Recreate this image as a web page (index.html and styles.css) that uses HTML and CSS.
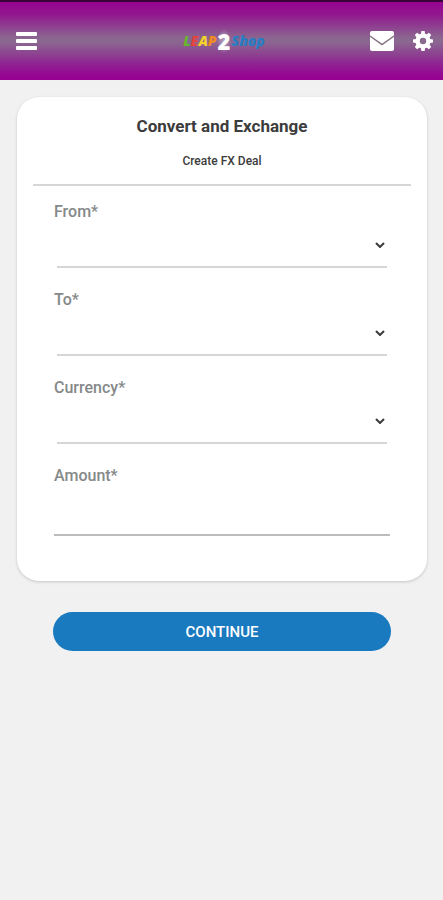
FILE: index.html
```html
<!DOCTYPE html>
<html lang="en">
<head>
<meta charset="utf-8">
<meta name="viewport" content="width=device-width, initial-scale=1">
<title>Convert and Exchange</title>
<link rel="stylesheet" href="styles.css">
</head>
<body>
<header class="topbar">
  <button class="icon-button menu" type="button" aria-label="Menu">
    <svg width="22" height="18" viewBox="0 0 22 18" fill="#fff"><rect x="1" width="21" height="4" rx="1"/><rect x="1" y="7" width="21" height="4" rx="1"/><rect x="1" y="14" width="21" height="4" rx="1"/></svg>
  </button>
  <a class="logo" href="#"><span class="green">L</span><span class="red">E</span><span class="yellow">A</span><span class="orange">P</span><span class="two">2</span><span class="blue">Shop</span></a>
  <div class="actions">
    <button class="icon-button" type="button" aria-label="Messages">
      <svg width="26" height="20" viewBox="0 0 26 20"><rect x="1" width="24" height="20" rx="2" fill="#fff"/><path d="M1 5l12 8.500 12-8.500" fill="none" stroke="#857080" stroke-width="1.500"/></svg>
    </button>
    <button class="icon-button" type="button" aria-label="Settings">
      <svg width="20" height="20" viewBox="0 0 20 20"><g fill="#fff"><circle cx="10" cy="10" r="7.600"/><path d="M7.900 3l.5-3h3.200l.5 3v14l-.5 3H8.400l-.5-3z"/><path d="M7.900 3l.5-3h3.200l.5 3v14l-.5 3H8.400l-.5-3z" transform="rotate(45 10 10)"/><path d="M7.900 3l.5-3h3.200l.5 3v14l-.5 3H8.400l-.5-3z" transform="rotate(90 10 10)"/><path d="M7.900 3l.5-3h3.200l.5 3v14l-.5 3H8.400l-.5-3z" transform="rotate(135 10 10)"/></g><circle cx="10" cy="10" r="3.200" fill="#886a8e"/></svg>
    </button>
  </div>
</header>
<main>
  <form>
    <section class="card">
      <div class="heading">
        <h1>Convert and Exchange</h1>
        <p>Create FX Deal</p>
      </div>
      <div class="fields">
        <div class="field">
          <label for="from">From*</label>
          <div class="select"><select id="from"><option></option></select><svg width="10" height="6" viewBox="0 0 10 6"><path d="M1 1l4 4 4-4"/></svg></div>
        </div>
        <div class="field">
          <label for="to">To*</label>
          <div class="select"><select id="to"><option></option></select><svg width="10" height="6" viewBox="0 0 10 6"><path d="M1 1l4 4 4-4"/></svg></div>
        </div>
        <div class="field">
          <label for="currency">Currency*</label>
          <div class="select"><select id="currency"><option></option></select><svg width="10" height="6" viewBox="0 0 10 6"><path d="M1 1l4 4 4-4"/></svg></div>
        </div>
        <div class="field">
          <label for="amount">Amount*</label>
          <input id="amount" type="text" inputmode="decimal">
        </div>
      </div>
    </section>
    <button class="continue" type="submit">CONTINUE</button>
  </form>
</main>
</body>
</html>
```
FILE: styles.css
```css
* { box-sizing: border-box; }

body {
  margin: 0;
  background: #f1f1f1;
  color: #3c3c3c;
  font-family: Roboto, "Liberation Sans", sans-serif;
}

.topbar {
  display: grid;
  grid-template-columns: 1fr auto 1fr;
  align-items: center;
  height: 80px;
  padding: 0 10px 0 15px;
  border-top: 2px solid #3a0338;
  background: linear-gradient(#960391, #92178f 16%, #8b6690 46%, #8b6690 52%, #8f2292 80%, #960391 96%);
}

.icon-button {
  display: flex;
  padding: 0;
  border: 0;
  background: none;
}

.actions {
  display: flex;
  justify-content: flex-end;
  align-items: center;
  gap: 18px;
}

.logo {
  display: flex;
  align-items: center;
  font: italic 800 14px/24px "Open Sans", sans-serif;
  text-decoration: none;
}

.green { color: #65b82e; }
.red { color: #e2453f; }
.yellow { color: #f3d32b; }
.orange { color: #f28a22; }
.blue { color: #287dc2; }

.two {
  padding: 0 1px;
  border-radius: 8px;
  background: radial-gradient(#b7a5c4, transparent 72%);
  color: #fff;
  font-size: 22px;
  font-style: normal;
}

main { padding: 17px 16px 17px 17px; }

.card {
  padding: 17px 16px 45px;
  border-radius: 22px;
  background: #fff;
  box-shadow: 0 1px 3px #c4c4c4;
}

.heading {
  padding-bottom: 15px;
  border-bottom: 2px solid #d6d6d6;
  text-align: center;
}

h1 {
  margin: 0 0 15px;
  font-size: 17px;
  font-weight: 700;
  line-height: 24px;
}

p {
  margin: 0;
  font-size: 12px;
  font-weight: 500;
  line-height: 16px;
}

.fields {
  display: grid;
  gap: 22px;
  padding: 16px 21px 0;
}

label {
  display: block;
  color: #858989;
  font-size: 16px;
  font-weight: 500;
  line-height: 20px;
}

.select {
  display: grid;
  align-items: center;
  margin: 0 3px;
}

.select > * { grid-area: 1 / 1; }

.select svg {
  justify-self: end;
  margin-right: 2px;
  fill: none;
  stroke: #3c3c3c;
  stroke-width: 2;
  pointer-events: none;
}

select,
input {
  display: block;
  width: 100%;
  height: 46px;
  padding: 0;
  border: 0;
  border-bottom: 2px solid #d6d6d6;
  border-radius: 0;
  background: none;
  color: inherit;
  font: inherit;
  appearance: none;
}

input {
  height: 50px;
  border-bottom-color: #bcbcbc;
}

.continue {
  display: block;
  width: calc(100% - 72px);
  height: 39px;
  margin: 31px auto 0;
  border: 0;
  border-radius: 20px;
  background: #1a7ac0;
  color: #fff;
  font: 500 15px/20px Roboto, sans-serif;
}
```
